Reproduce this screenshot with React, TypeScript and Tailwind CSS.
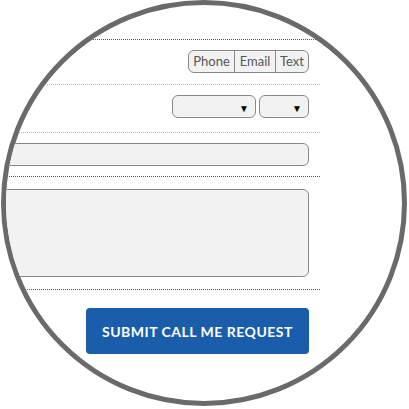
import React from "react";

const font = { fontFamily: "Lato, 'Open Sans', sans-serif" };

const Caret: React.FC = () => (
  <span className="text-[10px] leading-none text-black">▼</span>
);

const App: React.FC = () => {
  return (
    <div className="w-[409px] h-[409px] bg-white" style={font}>
      <div className="ml-[1px] w-[406px] h-[406px] rounded-full border-[5px] border-[#6a6a6a] overflow-hidden bg-white">
        <div className="mt-[34px] ml-[-60px] w-[374px] flex flex-col">
          {/* contact method */}
          <div className="border-t border-dotted border-[#555] pt-[10px] pb-[11px] pr-[11px] flex justify-end">
            <div className="flex h-[23px] rounded-[6px] border border-[#888] bg-[#f2f2f2] text-[13px] text-[#555] overflow-hidden">
              <span className="w-[46px] flex items-center justify-center border-r border-[#888]">Phone</span>
              <span className="w-[41px] flex items-center justify-center border-r border-[#888]">Email</span>
              <span className="w-[32px] flex items-center justify-center">Text</span>
            </div>
          </div>

          {/* time selects */}
          <div className="border-t border-dotted border-[#bbb] pt-[10px] pb-[14px] pr-[11px] flex justify-end gap-[3px]">
            <div className="w-[84px] h-[23px] rounded-[6px] border border-[#888] bg-[#f2f2f2] flex items-center justify-end pr-[6px] pt-[2px]">
              <Caret />
            </div>
            <div className="w-[50px] h-[23px] rounded-[6px] border border-[#888] bg-[#f2f2f2] flex items-center justify-end pr-[6px] pt-[2px]">
              <Caret />
            </div>
          </div>

          {/* text input */}
          <div className="border-t border-dotted border-[#bbb] pt-[10px] pb-[10px] pr-[11px]">
            <div className="h-[23px] rounded-[6px] border border-[#888] bg-[#f2f2f2]" />
          </div>

          {/* message */}
          <div className="border-t border-dotted border-[#555] pt-[12px] pb-[12px] pr-[11px]">
            <div className="h-[88px] rounded-[6px] border border-[#888] bg-[#f2f2f2]" />
          </div>

          {/* submit */}
          <div className="border-t border-dotted border-[#555] pt-[18px] pr-[11px] flex justify-end">
            <button
              type="button"
              className="w-[223px] h-[46px] rounded-[4px] bg-[#1a5dab] text-white text-[14px] font-bold uppercase tracking-[0.5px]"
            >
              Submit Call Me Request
            </button>
          </div>
        </div>
      </div>
    </div>
  );
};

export default App;
